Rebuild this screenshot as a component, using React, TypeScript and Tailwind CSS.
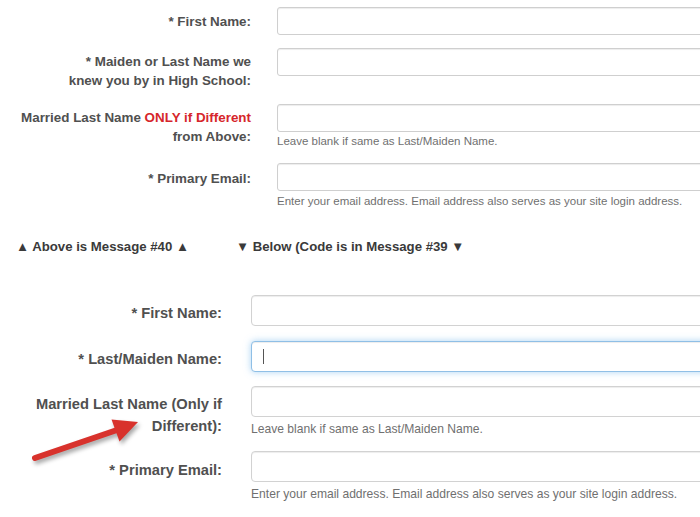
import React from "react";

const font = { fontFamily: '"Liberation Sans", Arial, sans-serif' };

function TopInput() {
  return (
    <div className="h-[28px] w-[480px] rounded-[3px] border border-[#cfcfcf] bg-white shadow-[inset_0_1px_1px_rgba(0,0,0,0.075)]" />
  );
}

function BottomInput({ focused }: { focused?: boolean }) {
  if (focused) {
    return (
      <div className="flex h-[31px] w-[500px] items-center rounded-[4px] border border-[#8fbfe6] bg-white pl-[11px] shadow-[inset_0_1px_1px_rgba(0,0,0,0.075),0_0_7px_rgba(102,175,233,0.55)]">
        <span className="block h-[15px] w-[1px] bg-[#555]" />
      </div>
    );
  }
  return (
    <div className="h-[31px] w-[500px] rounded-[4px] border border-[#d2d2d2] bg-white shadow-[inset_0_1px_1px_rgba(0,0,0,0.075)]" />
  );
}

export default function App() {
  return (
    <div className="relative h-[517px] w-[700px] overflow-hidden bg-white" style={font}>
      {/* Top section */}
      <div className="pt-[7px]">
        <div className="flex">
          <div className="w-[251px] shrink-0 pt-[5px] text-right text-[13.4px] font-bold leading-[19px] text-[#505050]">
            * First Name:
          </div>
          <div className="ml-[26px]">
            <TopInput />
          </div>
        </div>
        <div className="mt-[13px] flex">
          <div className="w-[251px] shrink-0 pt-[4px] text-right text-[13.4px] font-bold leading-[19px] text-[#505050]">
            * Maiden or Last Name we
            <br />
            knew you by in High School:
          </div>
          <div className="ml-[26px]">
            <TopInput />
          </div>
        </div>
        <div className="mt-[14px] flex">
          <div className="w-[251px] shrink-0 pt-[4px] text-right text-[13.4px] font-bold leading-[19px] text-[#505050]">
            Married Last Name <span className="text-[#d6262b]">ONLY if Different</span>
            <br />
            from Above:
          </div>
          <div className="ml-[26px]">
            <TopInput />
            <div className="mt-[2px] text-[11.5px] leading-[15px] text-[#707070]">
              Leave blank if same as Last/Maiden Name.
            </div>
          </div>
        </div>
        <div className="mt-[14px] flex">
          <div className="w-[251px] shrink-0 pt-[6px] text-right text-[13.4px] font-bold leading-[19px] text-[#505050]">
            * Primary Email:
          </div>
          <div className="ml-[26px]">
            <TopInput />
            <div className="mt-[3px] text-[11.5px] leading-[15px] text-[#707070]">
              Enter your email address. Email address also serves as your site login address.
            </div>
          </div>
        </div>
      </div>

      {/* Separator */}
      <div className="mt-[28px] flex pl-[16px] text-[13.2px] font-bold leading-[20px] text-[#3a3a3a]">
        <div className="w-[220px]">▲ Above is Message #40 ▲</div>
        <div>▼ Below (Code is in Message #39 ▼</div>
      </div>

      {/* Bottom section */}
      <div className="mt-[38px]">
        <div className="flex">
          <div className="w-[222px] shrink-0 pt-[8px] text-right text-[14.7px] font-bold leading-[21px] text-[#505050]">
            * First Name:
          </div>
          <div className="ml-[29px]">
            <BottomInput />
          </div>
        </div>
        <div className="mt-[15px] flex">
          <div className="w-[222px] shrink-0 pt-[8px] text-right text-[14.7px] font-bold leading-[21px] text-[#505050]">
            * Last/Maiden Name:
          </div>
          <div className="ml-[29px]">
            <BottomInput focused />
          </div>
        </div>
        <div className="mt-[14px] flex">
          <div className="w-[222px] shrink-0 pt-[8px] text-right text-[14.7px] font-bold leading-[21.5px] text-[#505050]">
            Married Last Name (Only if
            <br />
            Different):
          </div>
          <div className="ml-[29px]">
            <BottomInput />
            <div className="mt-[4px] text-[12.1px] leading-[16px] text-[#707070]">
              Leave blank if same as Last/Maiden Name.
            </div>
          </div>
        </div>
        <div className="mt-[14px] flex">
          <div className="w-[222px] shrink-0 pt-[9px] text-right text-[14.7px] font-bold leading-[21px] text-[#505050]">
            * Primary Email:
          </div>
          <div className="ml-[29px]">
            <BottomInput />
            <div className="mt-[4px] text-[12.1px] leading-[16px] text-[#707070]">
              Enter your email address. Email address also serves as your site login address.
            </div>
          </div>
        </div>
      </div>

      {/* Red annotation arrow */}
      <svg
        className="pointer-events-none absolute left-[20px] top-[400px]"
        width="140"
        height="75"
        viewBox="0 0 140 75"
        style={{ filter: "drop-shadow(2px 3px 2px rgba(0,0,0,0.35))" }}
      >
        <line x1="15" y1="58" x2="97" y2="30" stroke="#d8322c" strokeWidth="6" strokeLinecap="round" />
        <polygon points="118,22 99.5,41.5 91.5,19.5" fill="#d8322c" />
      </svg>
    </div>
  );
}
